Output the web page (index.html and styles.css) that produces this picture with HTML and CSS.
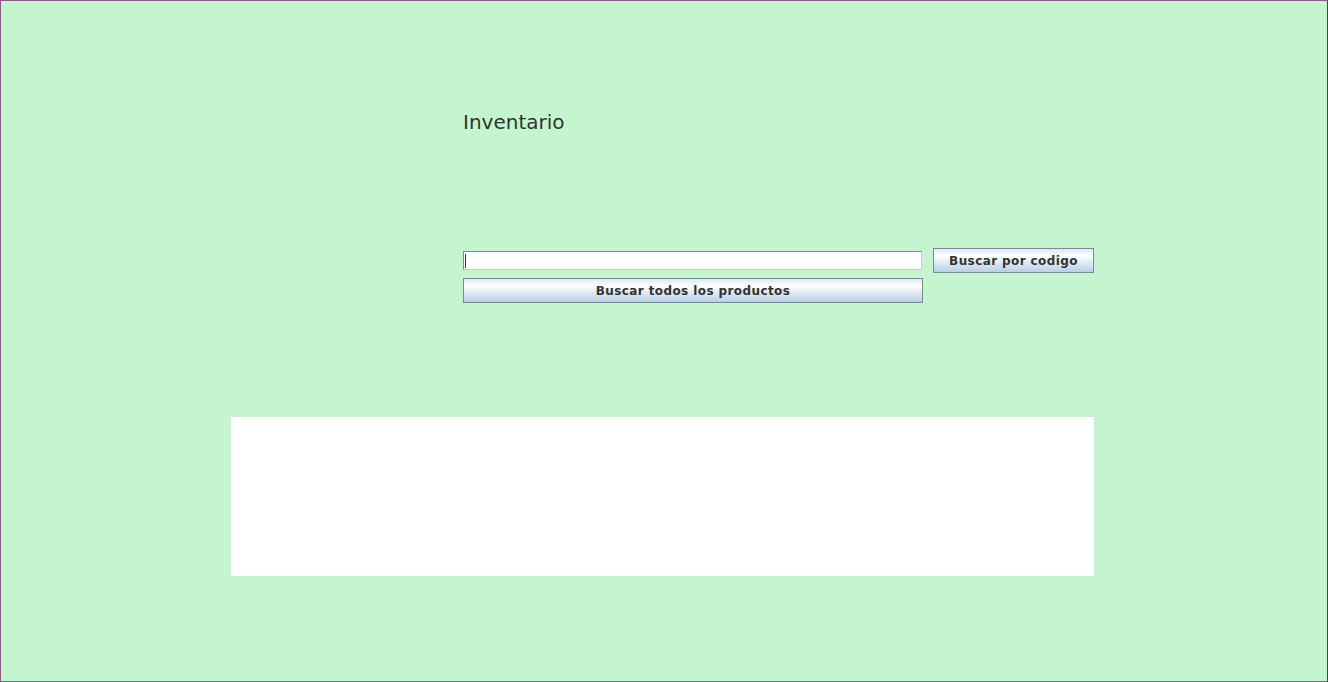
FILE: index.html
```html
<!DOCTYPE html>
<html lang="es">
<head>
<meta charset="utf-8">
<title>Inventario</title>
<link rel="stylesheet" href="styles.css">
</head>
<body>
<div class="frame">
  <div class="form">
    <h1 class="title">Inventario</h1>
    <div class="search-row">
      <div class="field"><span class="caret"></span></div>
      <button class="btn btn-code">Buscar por codigo</button>
    </div>
    <button class="btn btn-all">Buscar todos los productos</button>
  </div>
  <div class="results"></div>
</div>
</body>
</html>
```
FILE: styles.css
```css
html, body {
  margin: 0;
  padding: 0;
  background: #c5f5cf;
}
.frame {
  width: 1328px;
  height: 682px;
  box-sizing: border-box;
  background: #c5f5cf;
  border: 1px solid #8a5a8a;
  border-right-color: #5a3a5a;
  overflow: hidden;
  font-family: "DejaVu Sans", sans-serif;
}
.form {
  margin-left: 462px;
  width: 632px;
  padding-top: 107px;
  display: flex;
  flex-direction: column;
}
.title {
  margin: 0;
  font-weight: normal;
  font-size: 20px;
  line-height: 28px;
  color: #333333;
  height: 28px;
}
.search-row {
  margin-top: 112px;
  display: flex;
  align-items: center;
  gap: 11px;
  height: 25px;
}
.field {
  width: 459px;
  height: 19px;
  box-sizing: border-box;
  background: #ffffff;
  border: 1px solid #7a8a99;
  border-right-color: #b8cfe5;
  border-bottom-color: #b8cfe5;
  box-shadow: inset 1px 1px 0 #ffffff;
  position: relative;
}
.caret {
  position: absolute;
  left: 1px;
  top: 2px;
  width: 1px;
  height: 14px;
  background: #333333;
}
.btn {
  font-family: "DejaVu Sans", sans-serif;
  font-weight: bold;
  font-size: 12px;
  color: #333333;
  height: 25px;
  box-sizing: border-box;
  border: 1px solid #7a8a99;
  background: linear-gradient(to bottom, #dde8f3 0%, #ffffff 30%, #e9f0f8 50%, #b8cfe5 100%);
  padding: 0;
  margin: 0;
  letter-spacing: 0.4px;
}
.btn-code {
  width: 161px;
}
.btn-all {
  margin-top: 5px;
  width: 460px;
}
.results {
  margin-top: 114px;
  margin-left: 230px;
  width: 863px;
  height: 159px;
  background: #ffffff;
}
```
